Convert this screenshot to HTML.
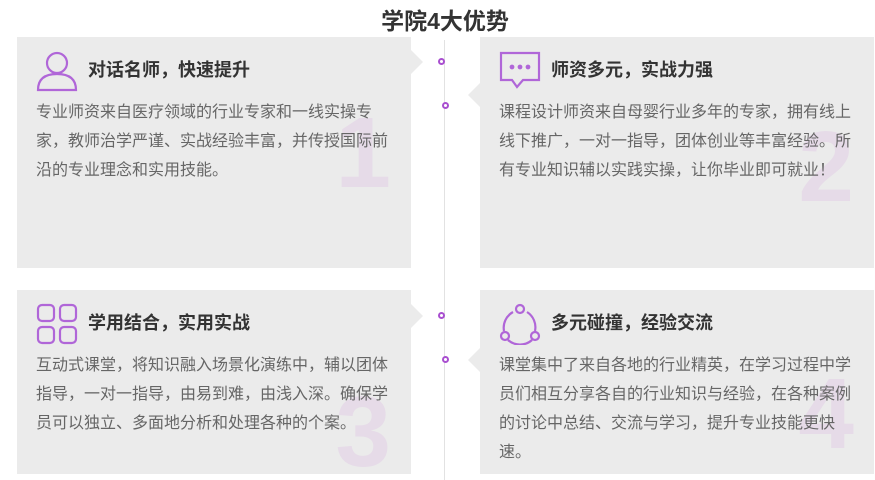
<!DOCTYPE html>
<html><head><meta charset="utf-8"><style>
*{margin:0;padding:0;box-sizing:border-box}
body{width:875px;height:474px;background:#fff;font-family:"Liberation Sans","Noto Sans CJK SC",sans-serif;position:relative;overflow:hidden}
h1{position:absolute;left:0;width:890px;top:2px;text-align:center;font-size:23px;color:#333;font-weight:bold}
.line{position:absolute;left:444px;top:40px;width:1px;height:440px;background:#e2e2e2}
.dot{position:absolute;width:7px;height:7px;border:2px solid #a94fd0;border-radius:50%;background:#fff}
.card{position:absolute;width:394px;background:#ebebeb;overflow:hidden}
.card h3{position:absolute;left:71px;top:19px;font-size:18px;color:#333;font-weight:bold}
.card p{position:absolute;left:19px;top:61px;width:354px;font-size:16px;line-height:29px;color:#666;z-index:2}
.num{position:absolute;right:20px;font-size:100px;font-weight:bold;color:#e6dbe8;line-height:1;z-index:1}
.card svg{position:absolute;left:19px;top:13px}
.arr{position:absolute;width:0;height:0;border-top:12px solid transparent;border-bottom:12px solid transparent}
</style></head><body>
<h1>学院4大优势</h1>
<div class="line"></div>
<div class="card" style="left:17px;top:37px;height:231px">
<svg width="42" height="42" viewBox="0 0 42 42" fill="none" stroke="#b066d8" stroke-width="2.2"><circle cx="21" cy="13" r="10"/><path d="M2 40 Q2 24 21 24 Q40 24 40 40 Z"/></svg>
<h3>对话名师，快速提升</h3>
<p>专业师资来自医疗领域的行业专家和一线实操专家，教师治学严谨、实战经验丰富，并传授国际前沿的专业理念和实用技能。</p>
<div class="num" style="top:66px">1</div></div>
<div class="arr" style="left:411px;top:50px;border-left:12px solid #ebebeb"></div>
<div class="card" style="left:480px;top:37px;height:231px">
<svg width="42" height="40" viewBox="0 0 42 40" fill="none" stroke="#b066d8" stroke-width="2.2"><path d="M2 3 H40 V30 H24 L18 37 L13 30 H2 Z"/><circle cx="13" cy="17" r="1.3" fill="#b066d8"/><circle cx="21" cy="17" r="1.3" fill="#b066d8"/><circle cx="29" cy="17" r="1.3" fill="#b066d8"/></svg>
<h3>师资多元，实战力强</h3>
<p>课程设计师资来自母婴行业多年的专家，拥有线上线下推广，一对一指导，团体创业等丰富经验。所有专业知识辅以实践实操，让你毕业即可就业！</p>
<div class="num" style="top:80px">2</div></div>
<div class="arr" style="left:468px;top:83px;border-right:12px solid #ebebeb"></div>
<div class="card" style="left:17px;top:290px;height:184px">
<svg width="42" height="42" viewBox="0 0 42 42" fill="none" stroke="#b066d8" stroke-width="2.2"><rect x="2" y="2" width="16" height="16" rx="4"/><rect x="24" y="2" width="16" height="16" rx="4"/><rect x="2" y="24" width="16" height="16" rx="4"/><rect x="24" y="24" width="16" height="16" rx="4"/></svg>
<h3>学用结合，实用实战</h3>
<p>互动式课堂，将知识融入场景化演练中，辅以团体指导，一对一指导，由易到难，由浅入深。确保学员可以独立、多面地分析和处理各种的个案。</p>
<div class="num" style="top:92px">3</div></div>
<div class="arr" style="left:411px;top:304px;border-left:12px solid #ebebeb"></div>
<div class="card" style="left:480px;top:290px;height:184px">
<svg width="42" height="42" viewBox="0 0 42 42" fill="none" stroke="#b066d8" stroke-width="2.2"><path d="M14 9 A18 18 0 0 0 5 28 M36 28 A18 18 0 0 0 28 9 M9 37 A18 18 0 0 0 33 37"/><circle cx="21" cy="6" r="4"/><circle cx="6" cy="33" r="4"/><circle cx="36" cy="33" r="4"/></svg>
<h3>多元碰撞，经验交流</h3>
<p>课堂集中了来自各地的行业精英，在学习过程中学员们相互分享各自的行业知识与经验，在各种案例的讨论中总结、交流与学习，提升专业技能更快速。</p>
<div class="num" style="top:74px">4</div></div>
<div class="arr" style="left:468px;top:348px;border-right:12px solid #ebebeb"></div>
<div class="dot" style="left:438px;top:58px"></div>
<div class="dot" style="left:442px;top:102px"></div>
<div class="dot" style="left:438px;top:312px"></div>
<div class="dot" style="left:442px;top:356px"></div>
</body></html>
